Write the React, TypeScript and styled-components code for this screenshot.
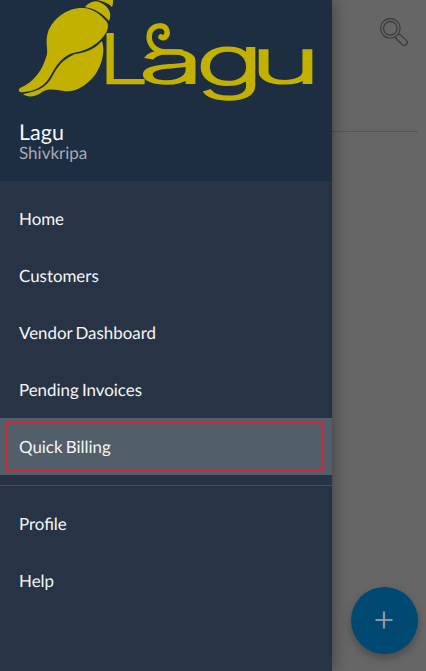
import React from "react";
import styled, { createGlobalStyle } from "styled-components";

const GlobalStyle = createGlobalStyle`
  * { box-sizing: border-box; }
  body { margin: 0; background: #666; font-family: Lato, sans-serif; overflow: hidden; text-rendering: geometricPrecision; }
`;

const Screen = styled.div`
  display: flex;
  width: 426px;
  height: 671px;
  background: #666666;
`;

const Drawer = styled.aside`
  flex: 0 0 332px;
  display: flex;
  flex-direction: column;
  background: #283445;
  box-shadow: 0 0 15px rgba(0, 0, 0, 0.42);
  z-index: 1;
`;

const Header = styled.header`
  height: 181px;
  background: #1d2d42;
`;

const LogoArt = styled.svg`
  display: block;
  width: 332px;
  height: 110px;
`;

const LogoLetter = styled.text`
  font-family: Inter, sans-serif;
  font-weight: 200;
  font-size: 60px;
  fill: #c3b102;
  stroke: #c3b102;
  stroke-width: 2.2px;
  vector-effect: non-scaling-stroke;
`;

const AccountName = styled.div`
  padding: 10px 0 0 19px;
  font-size: 21.5px;
  line-height: 24px;
  color: #f7f8f9;
`;

const AccountPlace = styled.div`
  padding-left: 19px;
  font-size: 17px;
  line-height: 18px;
  color: #a6abb2;
`;

const Menu = styled.nav<{ $divided?: boolean }>`
  display: flex;
  flex-direction: column;
  padding: ${(p) => (p.$divided ? "9px 0 0" : "9px 0 10px")};
  border-top: ${(p) => (p.$divided ? "1px solid #465160" : "0")};
`;

const MenuItem = styled.a<{ $active?: boolean }>`
  display: flex;
  height: 57px;
  padding: 4px 9px 3px 5px;
  background: ${(p) => (p.$active ? "#535e6b" : "transparent")};
  color: #f5f6f7;
  font-size: 16.9px;
  word-spacing: -1.2px;
`;

const ItemFrame = styled.span<{ $active?: boolean }>`
  display: flex;
  flex: 1;
  align-items: center;
  padding: 0 0 2px 12px;
  border: 2px solid ${(p) => (p.$active ? "#cb2935" : "transparent")};
`;

const Content = styled.main`
  flex: 1;
  display: flex;
  flex-direction: column;
  justify-content: space-between;
  align-items: flex-end;
  padding-right: 8px;
`;

const TopBar = styled.div`
  width: 100%;
  height: 132px;
  display: flex;
  justify-content: flex-end;
  padding: 16px 8px 0 0;
  border-bottom: 1px solid #555;
`;

const SearchIcon = styled.svg`
  width: 32px;
  height: 32px;
  fill: none;
  stroke: #3d3d3d;
  stroke-width: 1.3;
`;

const AddButton = styled.button`
  width: 67px;
  height: 67px;
  margin: 0 0 17px;
  padding: 0 1px 1px 0;
  border: 0;
  border-radius: 50%;
  background: #004973;
  box-shadow: 0 4px 8px rgba(0, 0, 0, 0.28);
  display: grid;
  place-items: center;
`;

const mainItems = ["Home", "Customers", "Vendor Dashboard", "Pending Invoices", "Quick Billing"];
const moreItems = ["Profile", "Help"];

function Logo() {
  return (
    <LogoArt viewBox="0 0 332 110" aria-label="Lagu">
      <g fill="#c3b102">
        <path d="M84 8C68 7 53 18 48 32C45 42 48 48 47 54C43 70 34 82 20 88C17 91 20 93 24 92C36 91 45 86 51 75C57 64 63 56 73 53C83 51 94 48 103 37C108 31 109 26 107 22C101 15 94 9 84 8Z" />
        <path d="M102 41C94 50 84 53 75 54C62 60 57 67 52 77C47 86 40 91 23 94C27 98 36 97 42 92C49 88 56 90 64 91C76 93 88 84 95 75C103 63 105 51 102 41Z" />
        <path d="M85 7C89 2 95 0 99 2C107 5 113 12 109 21C103 14 96 9 85 7Z" />
        <path d="M97 0H113C113 3 113 5 112 7C108 3 103 1 97 0Z" />
      </g>
      <LogoLetter transform="translate(99 82.5) scale(1.45 1.12)">L</LogoLetter>
      <LogoLetter transform="translate(139 82.5) scale(2.02 0.98)">a</LogoLetter>
      <LogoLetter transform="translate(196 84.5) scale(1.9 1.12)">g</LogoLetter>
      <LogoLetter transform="translate(250 82.5) scale(2.02 1)">u</LogoLetter>
      <path
        d="M161 37C164 39 168 36 167 31C165 24 154 24 150 32C147 42 153 51 165 52H181"
        fill="none"
        stroke="#c3b102"
        strokeWidth="5.5"
        strokeLinecap="round"
      />
    </LogoArt>
  );
}

function Item({ label, active }: { label: string; active?: boolean }) {
  return (
    <MenuItem $active={active}>
      <ItemFrame $active={active}>{label}</ItemFrame>
    </MenuItem>
  );
}

export default function App() {
  return (
    <>
      <GlobalStyle />
      <Screen>
        <Drawer>
          <Header>
            <Logo />
            <AccountName>Lagu</AccountName>
            <AccountPlace>Shivkripa</AccountPlace>
          </Header>
          <Menu>
            {mainItems.map((label) => (
              <Item key={label} label={label} active={label === "Quick Billing"} />
            ))}
          </Menu>
          <Menu $divided>
            {moreItems.map((label) => (
              <Item key={label} label={label} />
            ))}
          </Menu>
        </Drawer>
        <Content>
          <TopBar>
            <SearchIcon viewBox="0 0 32 32" aria-label="Search">
              <circle cx="12.3" cy="12.3" r="9.8" />
              <circle cx="12.3" cy="12.3" r="6.8" />
              <path d="M17.6 21L18.5 23L24.5 28.8C27 31 31 27 28.6 24.6L22.5 18.8L20.6 17.8" />
            </SearchIcon>
          </TopBar>
          <AddButton aria-label="Add">
            <svg width="18" height="18" viewBox="0 0 18 18" stroke="#8d969c" strokeWidth="2.2">
              <path d="M9 .5V17.5M.5 9H17.5" />
            </svg>
          </AddButton>
        </Content>
      </Screen>
    </>
  );
}
